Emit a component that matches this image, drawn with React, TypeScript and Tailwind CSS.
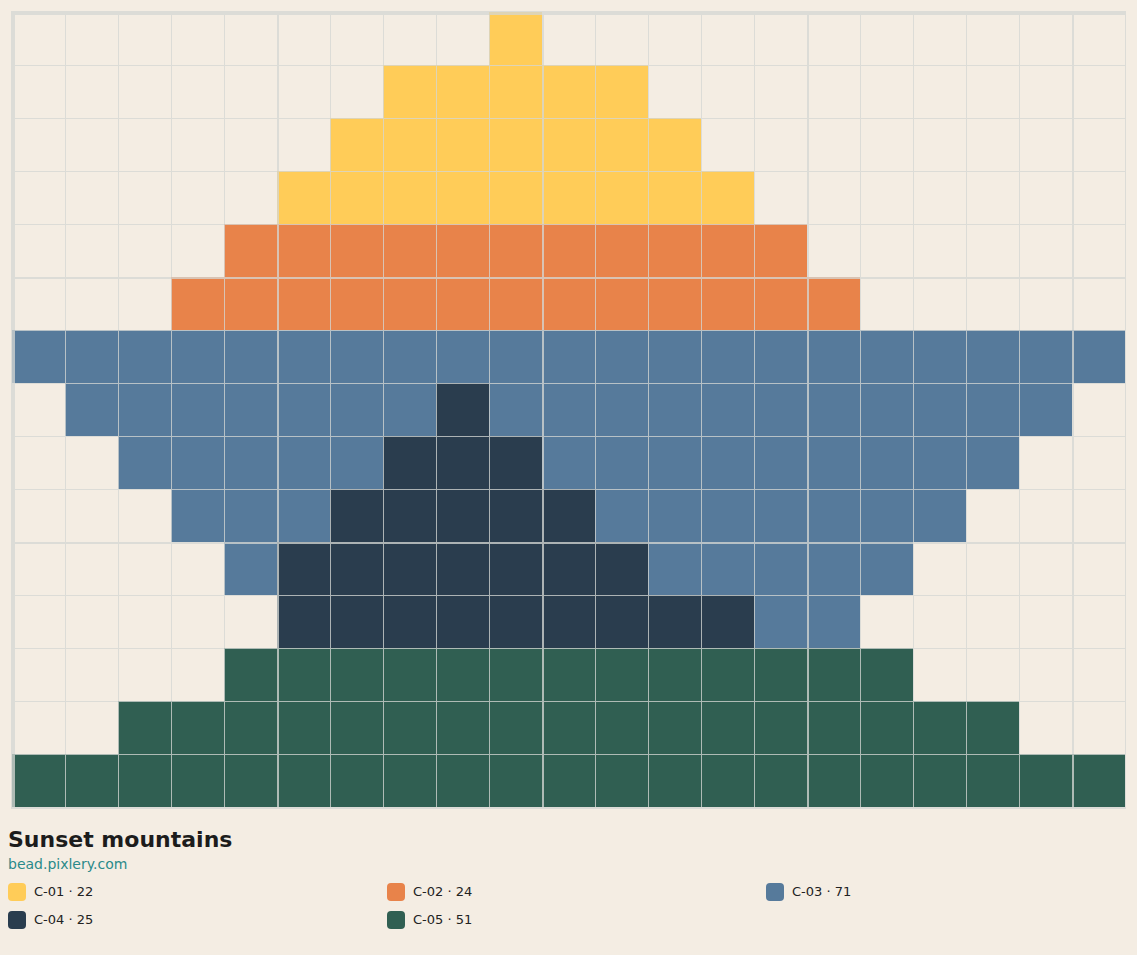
import React from "react"

type Key = "Y" | "O" | "B" | "D" | "G"

const COLS = 21
const ROWS = 15

const fills: Record<Key, string> = {
    Y: "bg-[#ffcc58]",
    O: "bg-[#e8834a]",
    B: "bg-[#567a9b]",
    D: "bg-[#2a3d4e]",
    G: "bg-[#305f52]",
}

// [from, to, colour] per row, later spans paint over earlier ones
const spans: [number, number, Key][][] = [
    [[9, 9, "Y"]],
    [[7, 11, "Y"]],
    [[6, 12, "Y"]],
    [[5, 13, "Y"]],
    [[4, 14, "O"]],
    [[3, 15, "O"]],
    [[0, 20, "B"]],
    [[1, 19, "B"], [8, 8, "D"]],
    [[2, 18, "B"], [7, 9, "D"]],
    [[3, 17, "B"], [6, 10, "D"]],
    [[4, 4, "B"], [5, 11, "D"], [12, 16, "B"]],
    [[5, 13, "D"], [14, 15, "B"]],
    [[4, 16, "G"]],
    [[2, 18, "G"]],
    [[0, 20, "G"]],
]

const legend = [
    { code: "C-01", count: 22, key: "Y" as Key },
    { code: "C-02", count: 24, key: "O" as Key },
    { code: "C-03", count: 71, key: "B" as Key },
    { code: "C-04", count: 25, key: "D" as Key },
    { code: "C-05", count: 51, key: "G" as Key },
]

function buildGrid() {
    const grid: (Key | null)[][] = []
    for (let r = 0; r < ROWS; r++) {
        const row: (Key | null)[] = Array(COLS).fill(null)
        spans[r].forEach(([a, b, k]) => {
            for (let c = a; c <= b; c++) row[c] = k
        })
        grid.push(row)
    }
    return grid
}

function Cell({ r, c, fill }: { r: number; c: number; fill: Key | null }) {
    const left = c === 0 ? "border-l-[3px]" : c % 5 === 0 ? "border-l-2" : "border-l"
    const top = r === 0 ? "border-t-[3px]" : r % 5 === 0 ? "border-t-2" : "border-t"
    return (
        <div
            className={`h-[53px] w-[53px] border-[#d4d7d3c4] ${left} ${top} ${fill ? fills[fill] : ""}`}
        />
    )
}

export default function App() {
    const grid = buildGrid()

    return (
        <div className="min-h-screen bg-[#f4ede3] font-['DejaVu_Sans',sans-serif]">
            <div className="pt-[11px] pl-[11px]">
                <div className="grid w-fit grid-cols-[repeat(21,53px)] border-t border-l border-r border-b-2 border-[#d4d7d3c4]">
                    {grid.map((row, r) => row.map((fill, c) => <Cell key={`${r}-${c}`} r={r} c={c} fill={fill} />))}
                </div>
            </div>

            <div className="px-2 pt-[17px]">
                <h1 className="text-[22px] font-bold leading-[28px] text-[#1c1c1c]">Sunset mountains</h1>
                <div className="text-[14px] leading-[20px] text-[#2a8a8a]">bead.pixlery.com</div>

                <div className="mt-[9px] grid grid-cols-3 gap-x-4 gap-y-[10px]">
                    {legend.map((item) => (
                        <div key={item.code} className="flex items-center gap-2">
                            <span className={`h-[18px] w-[18px] rounded-[4px] ${fills[item.key]}`} />
                            <span className="text-[13px] leading-[18px] text-[#222222]">
                                {item.code} · {item.count}
                            </span>
                        </div>
                    ))}
                </div>
            </div>
        </div>
    )
}
